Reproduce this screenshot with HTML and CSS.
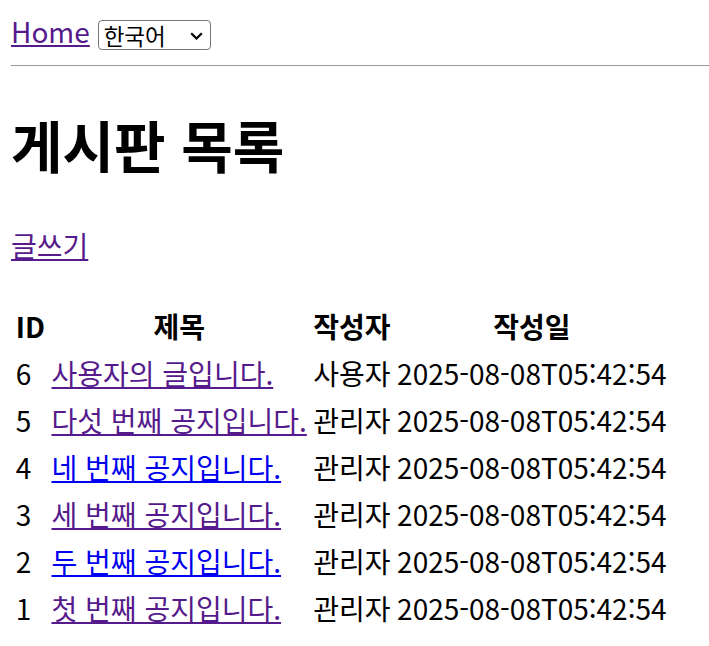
FILE: index.html
```html
<!doctype html>
<html lang="ko">
<head>
<meta charset="utf-8">
<link rel="stylesheet" href="styles.css">
<title>게시판 목록</title>
</head>
<body>
<div class="top-nav">
<a href="/" class="visited">Home</a>
<span class="lang-wrap">
<select class="lang-select">
<option>한국어</option>
<option>English</option>
</select>
<svg class="lang-arrow" width="13" height="8" viewBox="0 0 13 8"><path d="M1.2 1.2 L6.5 6.5 L11.8 1.2" fill="none" stroke="black" stroke-width="2.2"/></svg>
</span>
</div>
<hr>
<h1>게시판 목록</h1>
<p><a href="/write" class="visited">글쓰기</a></p>

<table class="board">
<thead>
<tr>
<th>ID</th>
<th>제목</th>
<th>작성자</th>
<th>작성일</th>
</tr>
</thead>
<tbody>
<tr><td>6</td><td><a href="/post/6" class="visited">사용자의 글입니다.</a></td><td>사용자</td><td>2025-08-08T05:42:54</td></tr>
<tr><td>5</td><td><a href="/post/5" class="visited">다섯 번째 공지입니다.</a></td><td>관리자</td><td>2025-08-08T05:42:54</td></tr>
<tr><td>4</td><td><a href="/post/4">네 번째 공지입니다.</a></td><td>관리자</td><td>2025-08-08T05:42:54</td></tr>
<tr><td>3</td><td><a href="/post/3" class="visited">세 번째 공지입니다.</a></td><td>관리자</td><td>2025-08-08T05:42:54</td></tr>
<tr><td>2</td><td><a href="/post/2">두 번째 공지입니다.</a></td><td>관리자</td><td>2025-08-08T05:42:54</td></tr>
<tr><td>1</td><td><a href="/post/1" class="visited">첫 번째 공지입니다.</a></td><td>관리자</td><td>2025-08-08T05:42:54</td></tr>
</tbody>
</table>
</body>
</html>
```

FILE: styles.css
```css
body {
    font-family: "Noto Sans CJK KR", "Noto Sans", sans-serif;
    font-size: 28px;
    color: black;
    background-color: white;
    margin: 11px 0 0 11px;
}
a {
    color: #0000ee;
}
a.visited {
    color: #551a8b;
}
.top-nav {
    display: block;
}
.lang-wrap {
    position: relative;
    display: inline-block;
    vertical-align: middle;
}
.lang-select {
    -webkit-appearance: none;
    appearance: none;
    display: block;
    font-family: "Noto Sans CJK KR", sans-serif;
    font-size: 22.5px;
    line-height: 28px;
    height: 30px;
    width: 113px;
    padding: 0 0 0 5px;
    border: 1px solid #767676;
    border-radius: 4px;
    background-color: white;
    color: black;
}
.lang-arrow {
    position: absolute;
    right: 8px;
    top: 12px;
    pointer-events: none;
}
hr {
    margin: 14px 0 14px;
    border: 0;
    border-top: 1px solid #9a9a9a;
}
h1 {
    font-size: 56px;
    margin: 37px 0 41px;
}
p {
    margin: 28px 0;
}
.board {
    border-spacing: 3px;
    margin-top: 36px;
}
.board th,
.board td {
    padding: 2px 1.75px;
}
```
